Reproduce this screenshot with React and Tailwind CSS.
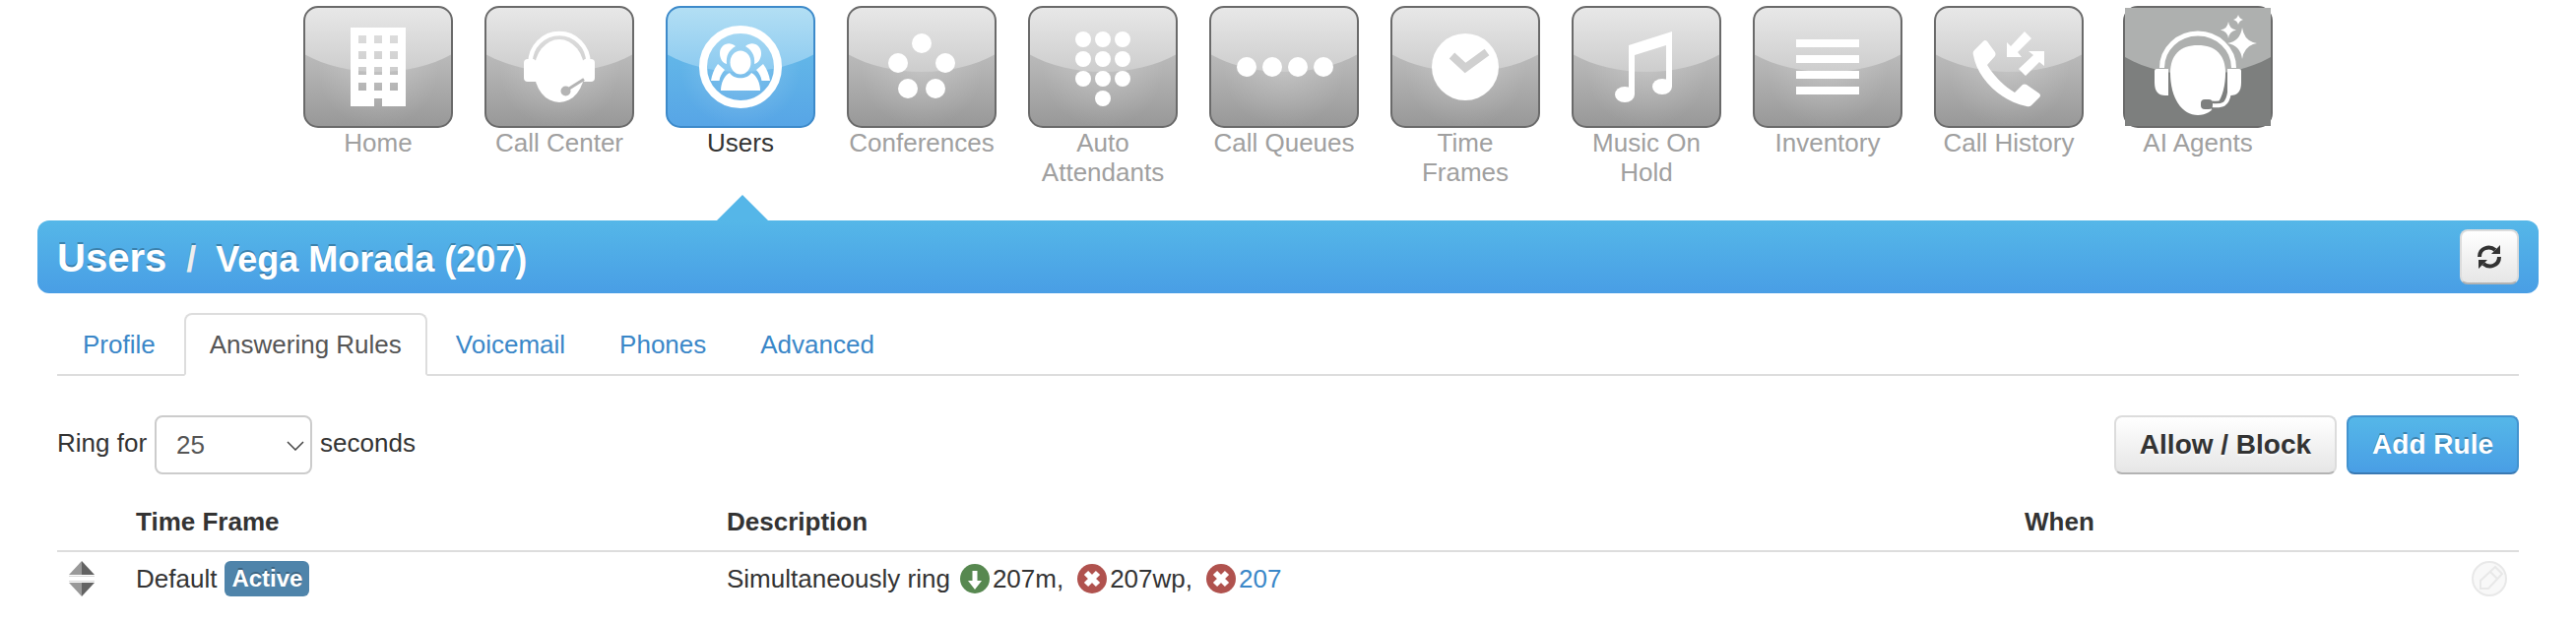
import { useState } from 'react';

const HomeIcon = () => (
  <path
    fill="#fff"
    fillRule="evenodd"
    d="M48 22h56v80H80v-8h-8v8H48z M56 30v8h8v-8z M72 30v8h8v-8z M88 30v8h8v-8z M56 46v8h8v-8z M72 46v8h8v-8z M88 46v8h8v-8z M56 62v8h8v-8z M72 62v8h8v-8z M88 62v8h8v-8z M56 78v8h8v-8z M72 78v8h8v-8z M88 78v8h8v-8z"
  />
);

const CallCenterIcon = () => (
  <g>
    <path d="M46.500 58A29.500 30 0 0 1 105.500 58" fill="none" stroke="#fff" strokeWidth="4.500" />
    <ellipse cx="76" cy="66" rx="25.500" ry="32" fill="#fff" />
    <path d="M40 58Q40 54 44 54H50L54 57V77H44Q40 77 40 73z" fill="#fff" />
    <path d="M112 58Q112 54 108 54H102L98 57V74L101 77H108Q112 77 112 73z" fill="#fff" />
    <path d="M82 86.500L101 74.500" stroke="#b4b4b4" strokeWidth="3" />
    <circle cx="82.500" cy="86.500" r="5" fill="#b4b4b4" />
  </g>
);

const UsersIcon = () => (
  <g fill="#fff">
    <circle cx="76" cy="62" r="38" fill="none" stroke="#fff" strokeWidth="8" />
    <ellipse cx="76" cy="57.500" rx="10.500" ry="12" />
    <path d="M65 68C69 75 83 75 87 68C93 71 96 79 96 86H56C56 79 59 71 65 68z" />
    <path d="M71 41C64 35 55 40 55 48C55 54 58 58 62 59C61 51 64 45 71 41z" />
    <path d="M81 41C88 35 97 40 97 48C97 54 94 58 90 59C91 51 88 45 81 41z" />
    <path d="M53 59L60 65C57 68 55 72 54.500 76H46C47 70 49 64 53 59z" />
    <path d="M99 59L92 65C95 68 97 72 97.500 76H106C105 70 103 64 99 59z" />
  </g>
);

const ConferencesIcon = () => (
  <g fill="#fff">
    <circle cx="76" cy="38" r="10" />
    <circle cx="52" cy="58" r="10" />
    <circle cx="100" cy="58" r="10" />
    <circle cx="62" cy="84" r="10" />
    <circle cx="90" cy="84" r="10" />
  </g>
);

const AttendantIcon = () => (
  <g fill="#fff">
    {[34, 54, 74].map((y) => [56, 76, 96].map((x) => <circle key={`${x}-${y}`} cx={x} cy={y} r="8" />))}
    <circle cx="76" cy="94" r="8" />
  </g>
);

const QueuesIcon = () => (
  <g fill="#fff">
    {[38, 64, 90, 116].map((x) => <circle key={x} cx={x} cy="62" r="10" />)}
  </g>
);

const TimeIcon = () => (
  <g>
    <circle cx="76" cy="62" r="34" fill="#fff" />
    <path d="M62.500 50.500L76 63L98 47" fill="none" stroke="#d0d0d0" strokeWidth="8" />
  </g>
);

const MusicIcon = () => (
  <g fill="#fff">
    <path d="M58 40L102 26V82H96V40L64 50V90H58z" />
    <ellipse cx="54" cy="90" rx="10" ry="8" />
    <ellipse cx="92" cy="82" rx="10" ry="8" />
  </g>
);

const InventoryIcon = () => (
  <path d="M44 34h64v8H44z M44 50h64v8H44z M44 66h64v8H44z M44 82h64v8H44z" fill="#fff" />
);

const HistoryIcon = () => (
  <g fill="#fff">
    <path d="M50 36Q52 34 54 36L62 47Q63 49 62 51L54 60C61 71 70 81 82 88L90 80Q92 79 94 80L107 89Q109 91 107 93L99 101Q97 103 94 102C68 97 44 74 40 50Q39 47 41 45z" />
    <path d="M74 52V37L78 41L92 26L99 33L85 47L89 52z" />
    <path d="M112 46V61L107 57L93 71L86 64L101 50L96 46z" />
  </g>
);

const AgentsIcon = () => (
  <g>
    <path d="M2 2H150V122H2z" fill="#7d7f7e" />
    <path d="M2 2H150V52C108 76 44 76 2 52z" fill="#aeb0af" />
    <path d="M39.500 63A36.500 35 0 0 1 112.500 63" fill="none" stroke="#fff" strokeWidth="5" />
    <path d="M76 40C94 40 104 50 104 68C104 94 92 111 76 111C60 111 48 94 48 68C48 50 58 40 76 40z" fill="#fff" />
    <path d="M108 89C106 100 101 102 90 101" fill="none" stroke="#7d7f7e" strokeWidth="9" />
    <path d="M32 66Q32 64 34 64H46V91H43Q32 91 32 78z" fill="#fff" />
    <path d="M120 66Q120 64 118 64H106V91H109Q120 91 120 78z" fill="#fff" />
    <path d="M108 88C106 101 101 102 90 101" fill="none" stroke="#fff" strokeWidth="4" />
    <rect x="79" y="95" width="12" height="10" rx="4" fill="#7d7f7e" />
    <path d="M121 22Q123 36 136 38Q123 40 121 54Q119 40 106 38Q119 36 121 22z" fill="#fff" />
    <path d="M107 16Q108 23.500 115 24.500Q108 25.500 107 33Q106 25.500 99 24.500Q106 23.500 107 16z" fill="#fff" />
    <path d="M117 9Q118 13 122 14Q118 15 117 19Q116 15 112 14Q116 13 117 9z" fill="#fff" />
  </g>
);

const navItems = [
  { label: 'Home', icon: HomeIcon },
  { label: 'Call Center', icon: CallCenterIcon },
  { label: 'Users', icon: UsersIcon, active: true },
  { label: 'Conferences', icon: ConferencesIcon },
  { label: 'Auto Attendants', icon: AttendantIcon },
  { label: 'Call Queues', icon: QueuesIcon },
  { label: 'Time Frames', icon: TimeIcon },
  { label: 'Music On Hold', icon: MusicIcon },
  { label: 'Inventory', icon: InventoryIcon },
  { label: 'Call History', icon: HistoryIcon },
  { label: 'AI Agents', icon: AgentsIcon, last: true },
];

const tabs = ['Profile', 'Answering Rules', 'Voicemail', 'Phones', 'Advanced'];

// Shared gradients for the nav tiles
const TileDefs = () => (
  <svg className="absolute h-0 w-0" aria-hidden="true">
    <defs>
      <linearGradient id="tileGray" x1="0" y1="0" x2="0" y2="1">
        <stop offset="0.4" stopColor="#bababa" />
        <stop offset="1" stopColor="#989898" />
      </linearGradient>
      <linearGradient id="tileBlue" x1="0" y1="0" x2="0" y2="1">
        <stop offset="0.4" stopColor="#62b6e8" />
        <stop offset="1" stopColor="#57a5e6" />
      </linearGradient>
      <radialGradient id="tileGlow" gradientUnits="userSpaceOnUse" cx="76" cy="62" r="62">
        <stop offset="0" stopColor="#fff" stopOpacity="0.22" />
        <stop offset="1" stopColor="#fff" stopOpacity="0" />
      </radialGradient>
      <linearGradient id="glossGray" x1="0" y1="0" x2="0" y2="1">
        <stop offset="0" stopColor="#e8e8e8" />
        <stop offset="1" stopColor="#cdcdcd" />
      </linearGradient>
      <linearGradient id="glossBlue" x1="0" y1="0" x2="0" y2="1">
        <stop offset="0" stopColor="#b3dff4" />
        <stop offset="1" stopColor="#8ccaf0" />
      </linearGradient>
    </defs>
  </svg>
);

const NavItem = ({ label, icon: Icon, active, last }) => (
  <a
    href="#"
    className={`relative flex w-[152px] flex-col items-center text-center leading-[30px] ${last ? 'ml-2' : ''} ${
      active ? 'text-[#333]' : 'text-[#a0a0a0]'
    }`}
  >
    <svg viewBox="0 0 152 124" className="w-full" aria-hidden="true">
      <rect x="1" y="1" width="150" height="122" rx="14" fill={active ? 'url(#tileBlue)' : 'url(#tileGray)'} />
      <rect x="1" y="1" width="150" height="122" rx="14" fill="url(#tileGlow)" />
      <path
        d="M1 49V15Q1 1 15 1H137Q151 1 151 15V49C108 73 44 73 1 49z"
        fill={active ? 'url(#glossBlue)' : 'url(#glossGray)'}
      />
      <rect x="1" y="1" width="150" height="122" rx="14" fill="none" stroke={active ? '#3d8aca' : '#6a6a6a'} strokeWidth="2" />
      <Icon />
    </svg>
    <span>{label}</span>
    {active && (
      <svg viewBox="0 0 52 26" className="absolute top-full left-[52px] mt-2 w-[52px]" aria-hidden="true">
        <path d="M26 0L52 26H0z" fill="#55b6e8" />
      </svg>
    )}
  </a>
);

const RefreshIcon = () => (
  <svg viewBox="0 0 26 26" className="w-[26px]" fill="none" stroke="#333" strokeWidth="4" aria-hidden="true">
    <path d="M3 13C3 4 13 1 19 6" />
    <path d="M23 13C23 22 13 25 7 20" />
    <path d="M24 1V10H15z M2 25V16H11z" fill="#333" stroke="none" />
  </svg>
);

const SortIcon = () => (
  <svg viewBox="0 0 26 36" className="h-9 w-[26px]" aria-hidden="true">
    <path d="M13 0V14H0z" fill="#999" />
    <path d="M13 0V14H26z" fill="#636363" />
    <path d="M13 36V22H0z" fill="#999" />
    <path d="M13 36V22H26z" fill="#636363" />
    <path d="M0 15.500H26M0 20.500H26" stroke="#d9d9d9" />
  </svg>
);

const OnlineIcon = () => (
  <svg viewBox="0 0 30 30" className="w-[30px]" aria-hidden="true">
    <circle cx="15" cy="15" r="15" fill="#578850" />
    <path d="M12.500 7H17.500V17H22L15 26L8 17H12.500z" fill="#fff" />
  </svg>
);

const OfflineIcon = () => (
  <svg viewBox="0 0 30 30" className="w-[30px]" aria-hidden="true">
    <circle cx="15" cy="15" r="15" fill="#b0524e" />
    <path d="M9 9L21 21M21 9L9 21" stroke="#fff" strokeWidth="6" />
  </svg>
);

const EditIcon = () => (
  <svg viewBox="0 0 36 36" className="w-9" fill="none" stroke="#e8e8e8" strokeWidth="2" aria-hidden="true">
    <circle cx="18" cy="18" r="17" fill="#f8f8f8" />
    <path d="M9 28V20L24 6L31 13L17 28z M19 11L26 18" />
  </svg>
);

const App = () => {
  const [ringFor, setRingFor] = useState('25');

  return (
    <div className="min-h-screen bg-white px-[38px] pt-1.5 font-['Liberation_Sans',Arial,sans-serif] text-[26px] leading-9 text-[#333]">
      <TileDefs />

      {/* Main navigation */}
      <nav className="flex justify-center gap-8">
        {navItems.map((item) => (
          <NavItem key={item.label} {...item} />
        ))}
      </nav>

      {/* Title bar */}
      <header className="mt-[34px] flex h-[74px] items-center justify-between rounded-xl bg-linear-to-b from-[#55b7e8] to-[#499ee5] px-5">
        <h1 className="flex items-baseline gap-5 pt-0.5 text-4xl font-bold text-white [text-shadow:0_-2px_0_rgba(0,0,0,0.25)]">
          <a href="#" className="text-[40px]">Users</a>
          <span className="text-[#eee]">/</span>
          <span>Vega Morada (207)</span>
        </h1>
        <button
          type="button"
          aria-label="Refresh"
          className="flex h-14 w-[60px] items-center justify-center rounded-lg border-2 border-[#dcdcdc] border-b-[#b3b3b3] bg-linear-to-b from-white to-[#e6e6e6]"
        >
          <RefreshIcon />
        </button>
      </header>

      <main className="px-5 pt-5">
        {/* Tabs */}
        <div className="flex gap-[3px] border-b-2 border-[#ddd]">
          {tabs.map((tab) => (
            <a
              key={tab}
              href="#"
              className={`-mb-0.5 flex h-16 items-center rounded-t-lg border-2 px-6 ${
                tab === 'Answering Rules' ? 'border-[#ddd] border-b-white bg-white text-[#555]' : 'border-transparent text-[#3a87c8]'
              }`}
            >
              {tab}
            </a>
          ))}
        </div>

        {/* Ring timeout and actions */}
        <div className="mt-10 flex items-center justify-between">
          <div className="flex items-center gap-2">
            <label htmlFor="ring-for" className="pb-1">Ring for</label>
            <div className="relative">
              <select
                id="ring-for"
                value={ringFor}
                onChange={(e) => setRingFor(e.target.value)}
                className="block h-15 w-40 appearance-none rounded-lg border-2 border-[#ccc] bg-white px-5 text-[#555]"
              >
                <option>20</option>
                <option>25</option>
                <option>30</option>
              </select>
              <svg viewBox="0 0 18 10" className="pointer-events-none absolute top-[26px] right-2 w-[18px]" fill="none" stroke="#444" strokeWidth="1.500" aria-hidden="true">
                <path d="M1 1L9 9L17 1" />
              </svg>
            </div>
            <span className="pb-1">seconds</span>
          </div>
          <div className="flex gap-2.5 text-[28px] font-bold">
            <button
              type="button"
              className="h-15 rounded-lg border-2 border-[#dcdcdc] border-b-[#b3b3b3] bg-linear-to-b from-white to-[#e6e6e6] px-6 [text-shadow:0_2px_2px_rgba(255,255,255,0.75)]"
            >
              Allow / Block
            </button>
            <button
              type="button"
              className="h-15 rounded-lg border-2 border-[#4393cf] border-b-[#3a79b3] bg-linear-to-b from-[#55b7e8] to-[#499ee5] px-6 text-white [text-shadow:0_-2px_0_rgba(0,0,0,0.25)]"
            >
              Add Rule
            </button>
          </div>
        </div>

        {/* Rules */}
        <table className="mt-[18px] w-full table-fixed text-left">
          <thead>
            <tr className="h-15 border-b-2 border-[#ddd]">
              <th className="w-[72px]" />
              <th className="w-[24%] px-2">Time Frame</th>
              <th className="px-2">Description</th>
              <th className="w-[18%] px-2">When</th>
              <th className="w-[60px]" />
            </tr>
          </thead>
          <tbody>
            <tr className="h-[54px]">
              <td className="pl-3"><SortIcon /></td>
              <td className="px-2">
                <div className="flex items-center gap-2">
                  <span>Default</span>
                  <span className="rounded-md bg-[#4f84aa] px-[7px] text-2xl leading-9 font-bold text-white [text-shadow:0_-2px_0_rgba(0,0,0,0.25)]">
                    Active
                  </span>
                </div>
              </td>
              <td className="px-2">
                <div className="flex items-center gap-2.5">
                  <span>Simultaneously ring</span>
                  <span className="flex items-center gap-[3px] pr-1"><OnlineIcon />207m,</span>
                  <span className="flex items-center gap-[3px] pr-1"><OfflineIcon />207wp,</span>
                  <span className="flex items-center gap-[3px]"><OfflineIcon /><a href="#" className="text-[#3a87c8]">207</a></span>
                </div>
              </td>
              <td className="px-2" />
              <td>
                <button type="button" aria-label="Edit" className="mx-auto block"><EditIcon /></button>
              </td>
            </tr>
          </tbody>
        </table>
      </main>
    </div>
  );
};

export default App;
